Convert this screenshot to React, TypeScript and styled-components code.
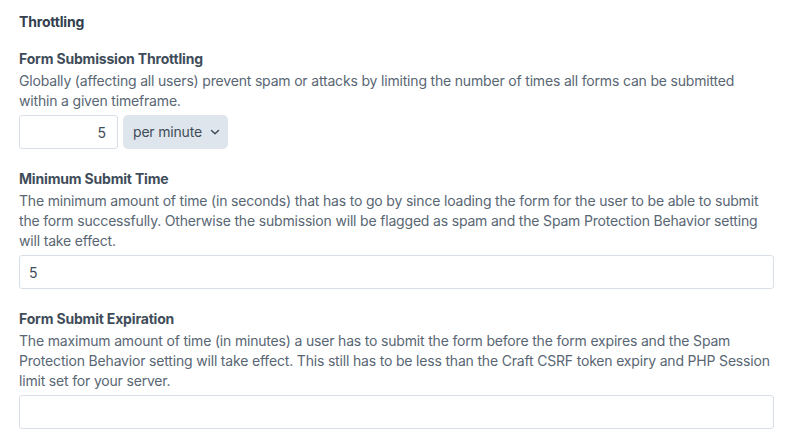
import React from 'react';
import styled, { createGlobalStyle } from 'styled-components';

const GlobalStyle = createGlobalStyle`
  html, body {
    margin: 0;
    padding: 0;
    background: #fff;
  }
  body {
    font-family: Inter, "Noto Sans", sans-serif;
    font-size: 14px;
    line-height: 20px;
    letter-spacing: -0.18px;
    color: #3f4d5a;
  }
`;

export default function App() {
  return (
    <>
      <GlobalStyle />
      <Page>
        <Heading>Throttling</Heading>

        <Field>
          <Label>Form Submission Throttling</Label>
          <Instructions>
            Globally (affecting all users) prevent spam or attacks by limiting the number of times all forms can be
            submitted within a given timeframe.
          </Instructions>
          <InlineRow>
            <NumberInput defaultValue="5" />
            <SelectBox>
              per minute
              <svg width="12" height="12" viewBox="0 0 12 12">
                <path d="M2.5 4.5 L6 7.8 L9.5 4.5" fill="none" stroke="#3f4d5a" strokeWidth="1.5" strokeLinecap="round" strokeLinejoin="round" />
              </svg>
            </SelectBox>
          </InlineRow>
        </Field>

        <Field>
          <Label>Minimum Submit Time</Label>
          <Instructions>
            The minimum amount of time (in seconds) that has to go by since loading the form for the user to be able to
            submit the form successfully. Otherwise the submission will be flagged as spam and the Spam Protection
            Behavior setting will take effect.
          </Instructions>
          <TextInput defaultValue="5" />
        </Field>

        <Field>
          <Label>Form Submit Expiration</Label>
          <Instructions>
            The maximum amount of time (in minutes) a user has to submit the form before the form expires and the Spam
            Protection Behavior setting will take effect. This still has to be less than the Craft CSRF token expiry and
            PHP Session limit set for your server.
          </Instructions>
          <TextInput defaultValue="" />
        </Field>
      </Page>
    </>
  );
}

const Page = styled.div`
  width: 755px;
  padding: 12px 0 0 19px;
`;

const Heading = styled.h2`
  margin: 0 0 17px;
  font-size: 14px;
  line-height: 20px;
  font-weight: 700;
  color: #333f4d;
`;

const Field = styled.div`
  margin-bottom: 20px;
`;

const Label = styled.div`
  font-weight: 700;
  color: #3f4d5a;
  margin-bottom: 2px;
`;

const Instructions = styled.div`
  color: #596673;
  margin-bottom: 4px;
`;

const InlineRow = styled.div`
  display: flex;
  gap: 5px;
`;

const inputBase = `
  box-sizing: border-box;
  height: 34px;
  border: 1px solid #d8dfe7;
  border-radius: 3px;
  font-family: Inter, "Noto Sans", sans-serif;
  font-size: 14px;
  color: #3f4d5a;
  padding: 6px 9px;
  outline: none;
  background: #fff;
`;

const NumberInput = styled.input`
  ${inputBase}
  width: 99px;
  text-align: right;
  padding-right: 11px;
`;

const TextInput = styled.input`
  ${inputBase}
  display: block;
  width: 755px;
`;

const SelectBox = styled.div`
  box-sizing: border-box;
  height: 34px;
  width: 105px;
  display: flex;
  align-items: center;
  justify-content: space-between;
  padding: 0 7px 0 10px;
  background: #dfe5ec;
  border-radius: 5px;
  color: #3f4d5a;
`;
